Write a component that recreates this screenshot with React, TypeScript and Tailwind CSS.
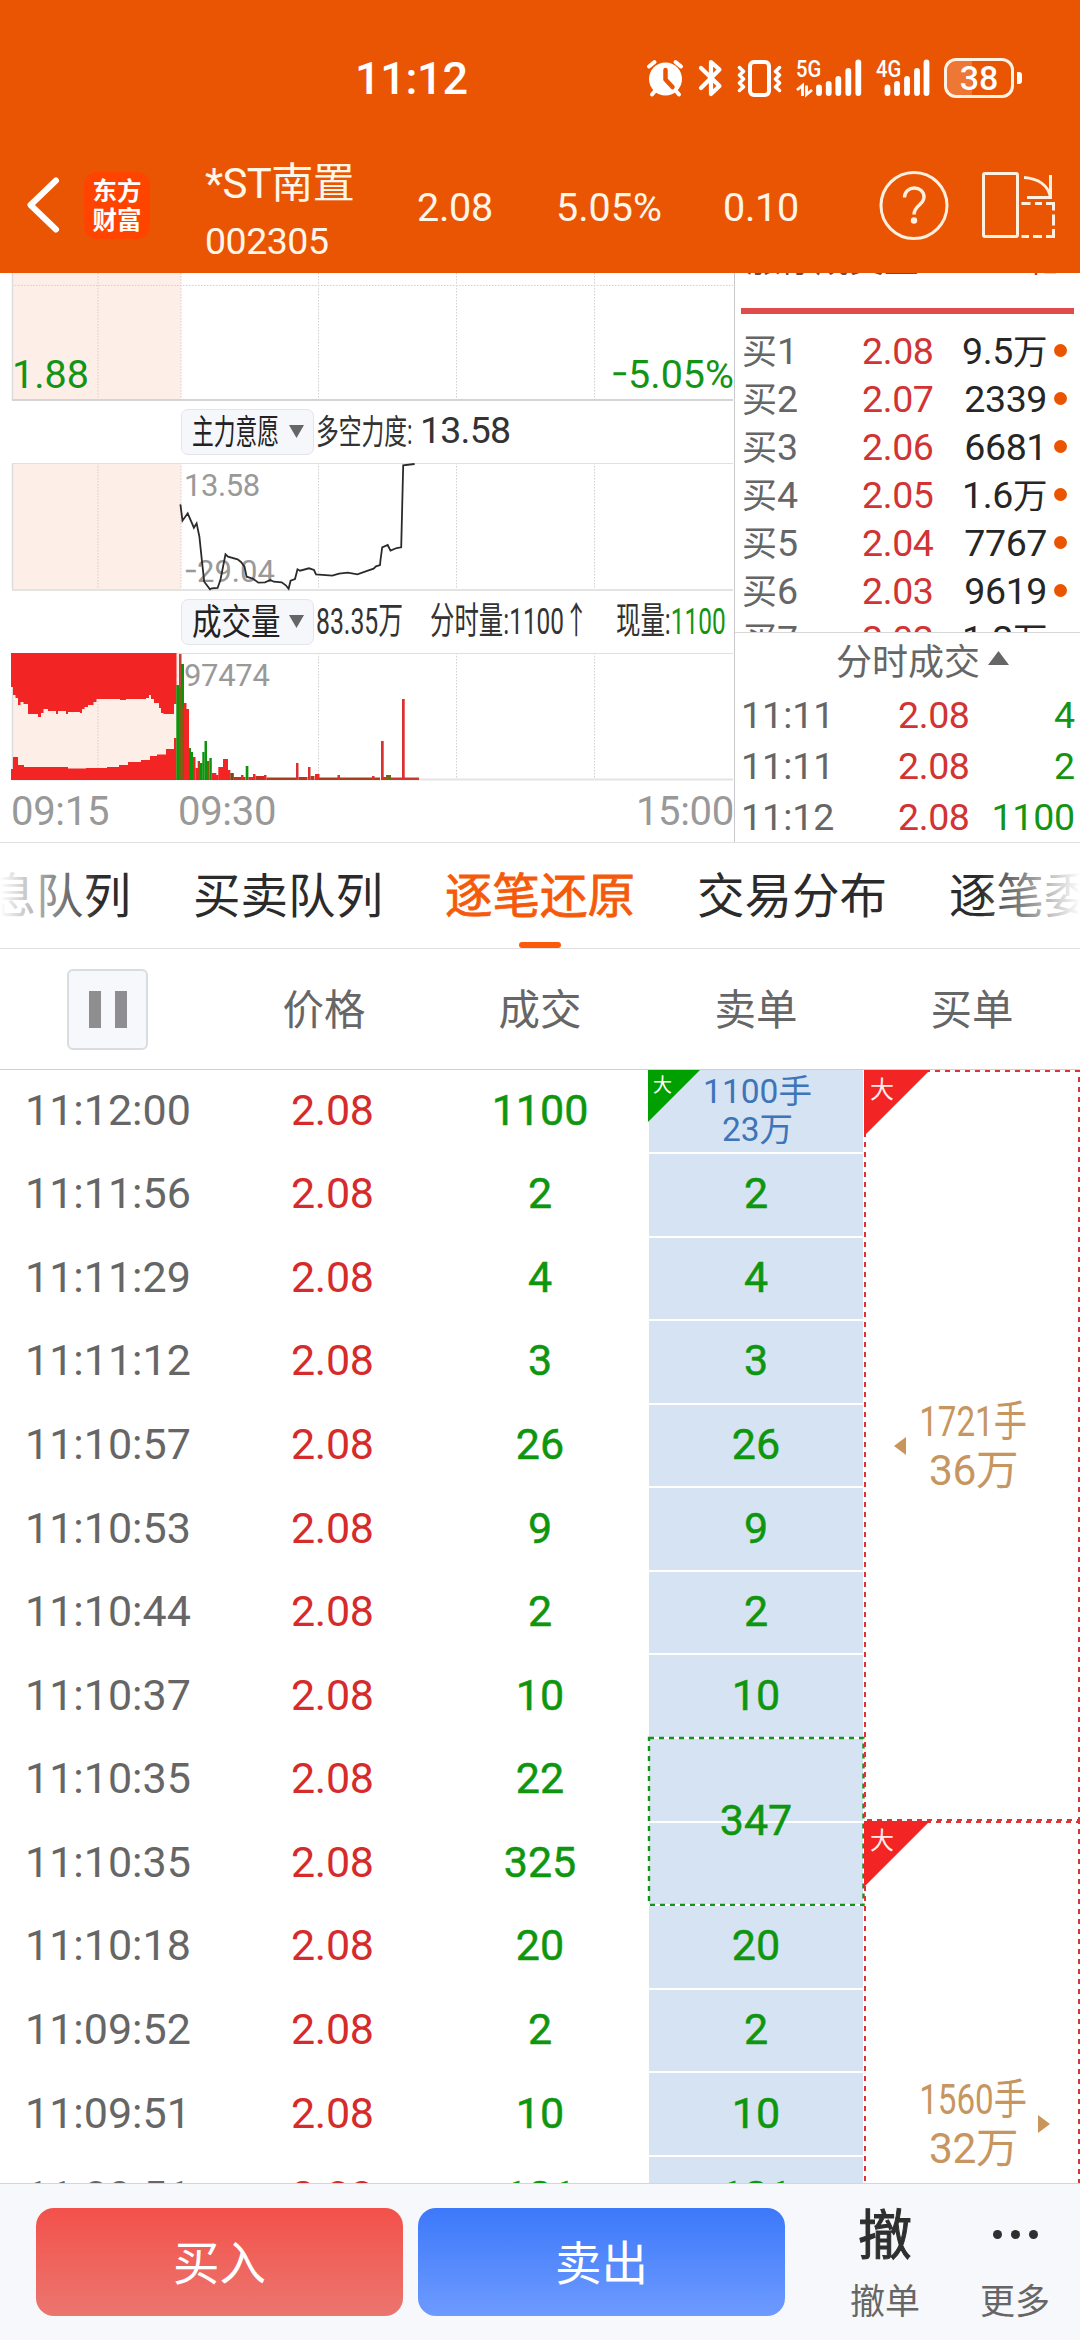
import React from "react";

const DASH = "5 5";

type TextProps = { className?: string; children: React.ReactNode };

/** Single line of figures or mixed text. */
function T({ className = "", children }: TextProps) {
  return <span className={`inline-block whitespace-nowrap -translate-y-[0.02em] ${className}`}>{children}</span>;
}

/** Single line of Chinese text, lowered to sit in the optical middle of its line. */
function C({ className = "", children }: TextProps) {
  return <span className={`inline-block whitespace-nowrap translate-y-[0.04em] ${className}`}>{children}</span>;
}

function Minus() {
  return <span className="inline-block w-[0.42em] origin-left scale-x-[0.78]">−</span>;
}

function StatusBar() {
  return (
    <div className="flex h-[156px] items-center text-white">
      <T className="ml-[355px] mt-[3px] w-[291px] text-[45px] font-medium tracking-[-0.3px]">11:12</T>
      <svg className="h-[40px] w-[38px] shrink-0" viewBox="0 0 38 40">
        <g stroke="#fff" strokeWidth="4" strokeLinecap="round" fill="none">
          <path d="M3 8.500L8.500 4M35 8.500L29.500 4" />
          <path d="M9 33L6 36.500M30 33L33 36.500" />
        </g>
        <circle cx="19.500" cy="21" r="16.500" fill="#fff" />
        <path d="M19.500 12v9.500l7 7.500" stroke="#ea5504" strokeWidth="4.500" fill="none" strokeLinejoin="round" strokeLinecap="round" />
      </svg>
      <svg className="ml-[14px] h-[40px] w-[26px] shrink-0" viewBox="0 0 26 40">
        <path d="M3 10L21.500 28L13 36V4L21.500 11.500L3 30" stroke="#fff" strokeWidth="4.200" fill="none" strokeLinecap="round" strokeLinejoin="round" />
      </svg>
      <svg className="ml-[13px] h-[40px] w-[46px] shrink-0" viewBox="0 0 46 40">
        <rect x="13" y="4" width="19" height="33" rx="4" stroke="#fff" strokeWidth="4" fill="none" />
        <path d="M2.500 9.500l4 4-4 3.500 4 4-4 4 4 4-4 3.500M42.500 9.500l-4 4 4 3.500-4 4 4 4-4 4 4 3.500" stroke="#fff" strokeWidth="3.500" fill="none" strokeLinejoin="round" strokeLinecap="round" />
      </svg>
      <div className="relative ml-[13px] h-[40px] w-[68px] shrink-0">
        <T className="absolute left-0 -top-px origin-left scale-x-[0.84] text-[24px] font-medium">5G</T>
        <svg className="absolute inset-0 h-[40px] w-[68px]" viewBox="0 0 68 40">
          <path d="M23 29.500v5.500M32.700 26v9M42.300 21v14M52.300 13v22M62.300 4.500v30.500" stroke="#fff" strokeWidth="5.800" strokeLinecap="round" />
          <path d="M6.500 38V27.500L1 32M10.500 27.500V36.500L16 32" stroke="#fff" strokeWidth="2.800" fill="none" />
        </svg>
      </div>
      <div className="relative ml-[12px] h-[40px] w-[56px] shrink-0">
        <T className="absolute left-0 -top-px origin-left scale-x-[0.84] text-[24px] font-medium">4G</T>
        <svg className="absolute inset-0 h-[40px] w-[56px]" viewBox="0 0 56 40">
          <path d="M11.500 29.500v5.500M21 26v9M31 21v14M41 13v22M50.500 4.500v30.500" stroke="#fff" strokeWidth="5.800" strokeLinecap="round" />
        </svg>
      </div>
      <div className="relative ml-[12px] flex h-[40px] w-[70px] shrink-0 items-center justify-center rounded-[12px] border-[3px] border-[#fff3e6]">
        <div className="absolute inset-y-0 left-0 w-[25px] rounded-l-[9px] bg-white/20" />
        <T className="mt-px text-[34px] font-medium">38</T>
      </div>
      <div className="ml-[3px] h-[12px] w-[5px] shrink-0 rounded-r-[3px] bg-white" />
    </div>
  );
}

function TitleBar() {
  return (
    <div className="flex h-[117px] text-[#fff6ea]">
      <svg className="ml-[24px] mt-[20px] h-[58px] w-[38px]" viewBox="0 0 38 58">
        <path d="M32 4.500L6.500 29L32 53.500" stroke="#fff" strokeWidth="6" fill="none" strokeLinecap="round" strokeLinejoin="round" />
      </svg>
      <div className="ml-[22px] mt-[16px] flex h-[67px] w-[66px] flex-col items-center rounded-[13px] bg-[#ff4400] pt-[4px] text-white">
        <C className="text-[24.5px] font-bold leading-[29px]">东方</C>
        <C className="text-[24.5px] font-bold leading-[29px]">财富</C>
      </div>
      <div className="ml-[55px] flex w-[212px] flex-col">
        <T className="mt-[7px] text-[42px] leading-[44px] tracking-[-0.6px]">*ST南置</T>
        <T className="mt-[13px] text-[37.5px] leading-[44px] tracking-[-0.5px]">002305</T>
      </div>
      <T className="mt-[33px] w-[139px] text-[39.5px] leading-[40px] tracking-[-0.3px]">2.08</T>
      <T className="mt-[33px] w-[167px] text-[39.5px] leading-[40px]">5.05%</T>
      <T className="mt-[33px] w-[156px] text-[39.5px] leading-[40px] tracking-[-0.3px]">0.10</T>
      <svg className="mt-[15px] h-[70px] w-[70px]" viewBox="0 0 70 70">
        <circle cx="35" cy="34.500" r="33" stroke="#fff0e0" strokeWidth="3" fill="none" />
        <path d="M25.500 26.500C25.500 14 45 14 45 26C45 34 35 34 35 43.500" stroke="#fff0e0" strokeWidth="3.400" fill="none" />
        <circle cx="35" cy="49.500" r="3.200" fill="#fff0e0" />
      </svg>
      <svg className="ml-[32px] mt-[15px] h-[70px] w-[74px]" viewBox="0 0 74 70">
        <g stroke="#fff0e0" strokeWidth="3" fill="none">
          <rect x="2.500" y="2.500" width="34" height="63" rx="1.500" />
          <path d="M43 6.500C57 7.500 67 14 69.500 26M69.500 4v22.500H46" />
          <path d="M40.500 32.500h9M54 32.500h7M65 32.500h7.500v7M72.500 43.500v11M72.500 58v7.500h-7.500M61 65.500h-9M48 65.500h-7.500" />
        </g>
      </svg>
    </div>
  );
}

function Grid({ h, dottedY }: { h: number; dottedY?: number }) {
  return (
    <g>
      <rect x="12" y="0" width="169" height={h} fill="#fdeee8" />
      <path d={`M98 0V${h}M181 0V${h}M318.500 0V${h}M456.500 0V${h}M594.500 0V${h}`} stroke="#d3d0cf" strokeWidth="1" strokeDasharray="1.500 1.500" />
      {dottedY !== undefined && <path d={`M12 ${dottedY}H733`} stroke="#d3d0cf" strokeDasharray="1.500 1.500" />}
      <path d={`M12.500 0V${h}`} stroke="#dcdcdc" strokeWidth="1.500" />
    </g>
  );
}

function Selector({ children }: { children: React.ReactNode }) {
  return (
    <div className="ml-[181px] flex h-[46px] w-[133px] shrink-0 items-center rounded-[7px] border border-[#e3e5ea] bg-[#f6f7fb] pl-[10px] text-[#222]">
      <div className="w-[97px]">{children}</div>
      <svg className="h-[13px] w-[15px]" viewBox="0 0 15 13">
        <path d="M0 0H15L7.500 13Z" fill="#666" />
      </svg>
    </div>
  );
}

const FORCE_LINE =
  "180.4,41.3 182.500,57.700 187.700,50.300 193.900,64.700 196.600,60.300 199.400,73.700 201.800,96.700 204.200,118.700 210,126.300 211.800,125.300 217.600,125 220.400,117 225.500,91.300 228,93.700 237.600,96.300 241,99 244.500,103.700 246.600,113.700 253,115.700 258.300,119.700 265,119.300 270.300,117 273.800,118.700 281.700,119.300 285.800,122.300 288.600,125.700 290.600,117.700 295,116 297.500,106.300 300,107.700 309,105.300 314,107 316,111.300 332.300,112.700 339,110.700 347.800,109.700 357.400,111.300 365,108.700 373.600,105.700 376,103.300 380,102 380.500,97 382.200,84.300 387.700,82 390.500,87.700 396.700,85 401.200,84.300 403.200,2.300 414.600,1";

// Call-auction volume, left to right: [x, y of the edge].
const AUCTION_TOP: [number, number][] = [
  [11, 34], [13, 42], [15.5, 45], [18, 52], [20.5, 49], [23.5, 51], [28, 61], [38, 64], [41, 60], [43.5, 56], [48, 58],
  [56, 61], [58, 58], [66, 61], [68, 59], [80, 60], [82, 56], [84.5, 54], [88, 52], [93.5, 49], [96.5, 46], [120, 47],
  [126, 46], [146, 45], [149, 42], [151, 46], [154, 50], [159, 55], [161, 60], [163.5, 61], [174, 51], [176.5, 51],
];

const AUCTION_BOTTOM: [number, number][] = [
  [11, 116], [13, 104], [18, 112], [24, 114], [68, 115.5], [86, 115], [107, 114], [119, 112], [128, 109], [141, 107],
  [150, 103], [157, 101.5], [166, 96], [174, 85], [176.5, 85],
];

function stepPath(points: [number, number][], base: number) {
  let d = `M${points[0][0]} ${base}V${points[0][1]}`;
  for (let i = 1; i < points.length; i++) d += `H${points[i][0]}V${points[i][1]}`;
  return `${d}V${base}Z`;
}

// [x, width, top, colour]
const VOLUME: [number, number, number, string][] = [
  [176.3, 3, 32, "#0d940d"], [179, 2.5, 1, "#c6403a"], [181, 3, 11, "#0d940d"],
  [184, 2.5, 50, "#f22424"], [186, 3, 56, "#f22424"], [189, 2, 95, "#0d940d"], [191, 2, 99, "#0d940d"],
  [193, 2.5, 104, "#f22424"], [195.5, 2.5, 115, "#f22424"], [197.7, 2.3, 108, "#c63a22"], [200, 2.5, 110, "#0d940d"],
  [202.3, 2.3, 99, "#0d940d"], [204.5, 2.5, 88, "#0d940d"], [207, 2.3, 108, "#7c6014"], [209.3, 2.5, 105, "#0d940d"],
  [211.8, 4.5, 120, "#f22424"], [216, 2.5, 122, "#f22424"], [218.3, 4.7, 114, "#f22424"], [223, 5, 106, "#f22424"],
  [228, 2.3, 117, "#f22424"], [230.3, 3.5, 120, "#7c4514"], [233.5, 12, 124, "#b33a20"], [241, 2.5, 122, "#f22424"],
  [245.7, 2.7, 113, "#0d940d"], [248.4, 5, 124, "#f22424"], [253, 2.5, 121, "#f22424"], [255.5, 9, 123, "#c23020"],
  [264, 2.5, 122, "#f22424"], [266.5, 30, 124.5, "#a54018"], [296, 2.5, 110, "#da3030"], [298.5, 9, 124, "#c23020"],
  [308, 2.5, 114, "#da3030"], [310.5, 4, 123, "#b33a20"], [315, 4.5, 121, "#f22424"], [319, 19, 124.5, "#a54018"],
  [337.5, 2.5, 122, "#da3030"], [340, 40, 124.5, "#a54018"], [372, 2.5, 123, "#da3030"], [381, 2.7, 88, "#da3030"],
  [383, 4, 124, "#f22424"], [386, 5, 122, "#6c6a14"], [391, 28, 124.5, "#c83a30"], [402, 2.7, 46, "#da3030"],
];

function ChartPane() {
  return (
    <div className="w-[735px] shrink-0 border-r border-[#c8c8cc]">
      <div className="relative h-[128px]">
        <svg className="block h-[128px] w-[733px]" viewBox="0 0 733 128">
          <Grid h={127} dottedY={12.5} />
          <path d="M12 127H733" stroke="#d4d4d4" strokeWidth="2" />
        </svg>
        <T className="absolute left-[12px] top-[83px] text-[39.5px] text-[#149414]">1.88</T>
        <T className="absolute right-0 top-[83px] text-[39.5px] text-[#149414]">
          <Minus />
          5.05%
        </T>
      </div>
      <div className="flex h-[62px] items-center pb-px">
        <Selector>
          <C className="origin-left scale-x-[0.63] text-[34.5px]">主力意愿</C>
        </Selector>
        <C className="ml-[2px] w-[104px] origin-left scale-x-[0.66] text-[34.5px] text-[#333]">多空力度:</C>
        <T className="text-[37.5px] tracking-[-0.8px] text-[#333]">13.58</T>
      </div>
      <div className="relative h-[127px]">
        <T className="absolute left-[184px] top-[8px] text-[31px] tracking-[-0.4px] text-[#999]">13.58</T>
        <T className="absolute left-[184px] top-[94px] text-[31px] text-[#999]">
          <Minus />
          29.04
        </T>
        <svg className="relative block h-[128px] w-[733px]" viewBox="0 0 733 128">
          <Grid h={126} />
          <path d="M12 .5H733" stroke="#e0e0e0" />
          <path d="M12 127H733" stroke="#dadada" strokeWidth="1.500" />
          <polyline points={FORCE_LINE} fill="none" stroke="#2b2b2b" strokeWidth="1.800" />
        </svg>
      </div>
      <div className="flex h-[63px] items-center">
        <Selector>
          <C className="origin-left scale-x-[0.82] text-[36px]">成交量</C>
        </Selector>
        <T className="ml-[2px] mt-[2px] w-[114px] origin-left scale-x-[0.67] text-[37px] text-[#333]">83.35万</T>
        <T className="mt-[2px] w-[186px] origin-left scale-x-[0.66] text-[37px] text-[#333]">分时量:1100↑</T>
        <T className="mt-[2px] w-[110px] origin-left scale-x-[0.66] text-[37px] text-[#333]">
          现量:<span className="text-[#149414]">1100</span>
        </T>
      </div>
      <div className="relative h-[127px]">
        <svg className="block h-[128px] w-[733px]" viewBox="0 0 733 128">
          <Grid h={126} />
          <path d="M12 .5H733" stroke="#e0e0e0" />
          <path d="M12 126.500H733" stroke="#e4e4e4" strokeWidth="2" />
          <path d={stepPath(AUCTION_TOP, 0)} fill="#f22424" />
          <path d={stepPath(AUCTION_BOTTOM, 127)} fill="#f22424" />
          {VOLUME.map(([x, w, y, c], i) => (
            <rect key={i} x={x} y={y} width={w} height={127 - y} fill={c} />
          ))}
          <path d="M179 35h2.500v20h2v72H179z" fill="#7c6014" />
        </svg>
        <T className="absolute left-[184px] top-[8px] text-[31px] tracking-[-0.3px] text-[#999]">97474</T>
      </div>
      <div className="flex h-[62px] items-center pt-[4px] text-[40px] tracking-[-0.3px] text-[#999]">
        <T className="ml-[11px] w-[167px]">09:15</T>
        <T className="w-[458px]">09:30</T>
        <T>15:00</T>
      </div>
    </div>
  );
}

const BIDS = [
  ["买1", "2.08", "9.5", "万"],
  ["买2", "2.07", "2339", ""],
  ["买3", "2.06", "6681", ""],
  ["买4", "2.05", "1.6", "万"],
  ["买5", "2.04", "7767", ""],
  ["买6", "2.03", "9619", ""],
  ["买7", "2.02", "1.2", "万"],
];

const TICKS = [
  ["11:11", "2.08", "4"],
  ["11:11", "2.08", "2"],
  ["11:12", "2.08", "1100"],
];

function QuotePane() {
  return (
    <div className="flex h-[569px] flex-1 flex-col">
      <div className="h-[360px] shrink-0 overflow-hidden border-b border-[#d8d8d8]">
        <div className="relative h-[35px] overflow-hidden">
          <T className="absolute -top-[29px] left-[11px] text-[34.5px] text-[#555]">涨停成交量</T>
          <T className="absolute -top-[27px] right-[19px] text-[32px] text-[#d63030]">2.1亿</T>
        </div>
        <div className="ml-[6px] mr-[6px] h-[6px] bg-[#e04c4c]" />
        <div className="pt-[15px]">
          {BIDS.map(([label, price, amount, unit]) => (
            <div key={label} className="flex h-[48px] items-center text-[37.5px]">
              <T className="ml-[7px] w-[120px] text-[#666]">
                <span className="text-[35px]">{label[0]}</span>
                {label[1]}
              </T>
              <T className="w-[80px] tracking-[-0.4px] text-[#d23333]">{price}</T>
              <T className="w-[105px] text-right tracking-[-0.4px] text-[#262626]">
                {amount}
                <span className="text-[34.5px]">{unit}</span>
              </T>
              <span className="mb-[5px] ml-[7px] h-[13px] w-[13px] rounded-full bg-[#ea5504]" />
            </div>
          ))}
        </div>
      </div>
      <div className="flex h-[58px] shrink-0 items-center text-[#666]">
        <C className="ml-[101px] text-[36px]">分时成交</C>
        <svg className="mb-[8px] ml-[8px] h-[14px] w-[21px]" viewBox="0 0 21 14">
          <path d="M0 14H21L10.500 0Z" fill="#666" />
        </svg>
      </div>
      {TICKS.map(([time, price, amount], i) => (
        <div key={i} className="flex h-[51px] shrink-0 items-center pt-px text-[37.5px]">
          <T className="ml-[6px] w-[157px] text-[#666]">{time}</T>
          <T className="w-[80px] tracking-[-0.4px] text-[#d23333]">{price}</T>
          <T className="w-[97px] text-right tracking-[-0.2px] text-[#149414]">{amount}</T>
        </div>
      ))}
    </div>
  );
}

const TABS = ["信息队列", "买卖队列", "逐笔还原", "交易分布", "逐笔委托"];

function Tabs() {
  return (
    <div className="relative flex h-[106px] justify-center overflow-hidden border-b border-[#e0e0e0] bg-white">
      {TABS.map((tab, i) => (
        <div
          key={tab}
          className={`relative flex w-[252px] shrink-0 items-center justify-center text-[47.5px] ${i === 2 ? "text-[#f55a0a] [-webkit-text-stroke:0.8px_#f55a0a]" : "text-[#2b2b2b]"}`}
        >
          <C>{tab}</C>
          {i === 2 && <span className="absolute bottom-0 left-[105px] h-[6px] w-[42px] rounded-[3px] bg-[#fa5a0a]" />}
        </div>
      ))}
      <div className="absolute inset-y-0 left-0 w-[100px] bg-gradient-to-r from-white to-white/0" />
      <div className="absolute inset-y-0 right-0 w-[100px] bg-gradient-to-l from-white to-white/0" />
    </div>
  );
}

function TableHead() {
  return (
    <div className="grid h-[121px] grid-cols-5 items-center border-b border-[#cfcfcf] text-center text-[41.5px] text-[#666]">
      <div className="ml-[67px] flex h-[81px] w-[81px] items-center justify-center gap-[14px] rounded-[6px] border-2 border-[#d9dce1] bg-[#f6f8fb]">
        <span className="h-[37px] w-[12px] bg-[#8e8e90]" />
        <span className="h-[37px] w-[12px] bg-[#8e8e90]" />
      </div>
      <C>价格</C>
      <C>成交</C>
      <C>卖单</C>
      <C>买单</C>
    </div>
  );
}

const TRADES: [string, string][] = [
  ["11:12:00", "1100"],
  ["11:11:56", "2"],
  ["11:11:29", "4"],
  ["11:11:12", "3"],
  ["11:10:57", "26"],
  ["11:10:53", "9"],
  ["11:10:44", "2"],
  ["11:10:37", "10"],
  ["11:10:35", "22"],
  ["11:10:35", "325"],
  ["11:10:18", "20"],
  ["11:09:52", "2"],
  ["11:09:51", "10"],
  ["11:09:51", "121"],
];

function TradeRows() {
  return (
    <div className="-mt-[0.6px] w-[648px]">
      {TRADES.map(([time, amount], i) => (
        <div key={i} className="flex h-[83.58px] items-center text-[43px]">
          <T className="ml-[25px] w-[266px] text-[#666]">{time}</T>
          <T className="w-[141px] tracking-[-0.3px] text-[#d62b2b]">2.08</T>
          <T className="w-[216px] text-center text-[#0f960f] [-webkit-text-stroke:0.5px_#0f960f]">{amount}</T>
        </div>
      ))}
    </div>
  );
}

function SellColumn() {
  return (
    <div className="-mt-[0.6px] w-[216px] text-[43px] text-[#0f960f]">
      {TRADES.map(([, amount], i) => {
        if (i === 9) return null;
        if (i === 8)
          return (
            <div key={i} className="relative h-[167.16px] pt-px">
              <div className="ml-px h-[81.58px] w-[214px] bg-[#d6e3f3]" />
              <div className="ml-px mt-[2px] h-[81.58px] w-[214px] bg-[#d6e3f3]" />
              <svg className="absolute inset-0 h-[168px] w-[217px] overflow-visible" viewBox="0 0 217 168">
                <rect x="1" y="0" width="214.500" height="167" fill="none" stroke="#149414" strokeWidth="2.400" strokeDasharray={DASH} />
              </svg>
              <div className="absolute inset-0 flex items-center justify-center [-webkit-text-stroke:0.5px_#0f960f]">
                <T>347</T>
              </div>
            </div>
          );
        return (
          <div key={i} className="relative h-[83.58px] p-px">
            <div className="flex h-full w-[214px] flex-col items-center justify-center bg-[#d6e3f3]">
              {i === 0 ? (
                <div className="flex flex-col items-center pl-[3px] pt-px text-[33.5px] text-[#3d75b8]">
                  <T className="leading-[38px]">1100手</T>
                  <T className="leading-[38px]">23万</T>
                </div>
              ) : (
                <T className="[-webkit-text-stroke:0.5px_#0f960f]">{amount}</T>
              )}
            </div>
            {i === 0 && (
              <div className="absolute left-0 top-[0.6px] flex h-[52px] w-[52px] items-start bg-[#00a000] pl-[5px] pt-[5px] text-white [clip-path:polygon(0_0,100%_0,0_100%)]">
                <C className="text-[19px]">大</C>
              </div>
            )}
          </div>
        );
      })}
    </div>
  );
}

function BigBadge() {
  return (
    <div className="absolute left-0 top-0 flex h-[66px] w-[66px] items-start bg-[#f22424] pl-[6px] pt-[7px] text-[#ffecec] [clip-path:polygon(0_0,100%_0,0_100%)]">
      <C className="text-[24px]">大</C>
    </div>
  );
}

function BuyColumn() {
  return (
    <div className="w-[216px] text-[#c79660]">
      <div className="relative flex h-[751px] flex-col items-center">
        <svg className="absolute inset-0 h-[751px] w-[216px]" viewBox="0 0 216 751">
          <rect x="1" y="1" width="214" height="749" fill="none" stroke="#d33" strokeWidth="2" strokeDasharray={DASH} />
        </svg>
        <BigBadge />
        <div className="mt-[328px] flex flex-col items-center pl-[3px] text-[42.5px]">
          <T className="scale-x-[0.78] leading-[49px]">1721手</T>
          <T className="leading-[49px] tracking-[-0.4px]">36万</T>
        </div>
        <svg className="absolute left-[30px] top-[367px] h-[18px] w-[12px]" viewBox="0 0 12 18">
          <path d="M12 0V18L0 9Z" fill="#c9955a" />
        </svg>
      </div>
      <div className="relative flex h-[362px] flex-col items-center">
        <svg className="absolute inset-0 h-[362px] w-[216px]" viewBox="0 0 216 362">
          <path d="M1 370V1H215V370" fill="none" stroke="#d33" strokeWidth="2" strokeDasharray={DASH} />
        </svg>
        <BigBadge />
        <div className="mt-[255px] flex flex-col items-center pl-[3px] text-[42.5px]">
          <T className="scale-x-[0.78] leading-[49px]">1560手</T>
          <T className="leading-[49px] tracking-[-0.4px]">32万</T>
        </div>
        <svg className="absolute left-[174px] top-[294px] h-[18px] w-[12px]" viewBox="0 0 12 18">
          <path d="M0 0V18L12 9Z" fill="#c9955a" />
        </svg>
      </div>
    </div>
  );
}

function ActionBar() {
  return (
    <div className="flex h-[157px] border-t border-[#d4d6da] bg-[#f6f8fb]">
      <button className="ml-[36px] mt-[24px] flex h-[108px] w-[367px] items-center justify-center rounded-[18px] bg-gradient-to-b from-[#f3504a] to-[#eb756f] text-[46.5px] text-white">
        <C>买入</C>
      </button>
      <button className="ml-[15px] mt-[24px] flex h-[108px] w-[367px] items-center justify-center rounded-[18px] bg-gradient-to-b from-[#3c78fa] to-[#6d9afe] text-[46.5px] text-white">
        <C>卖出</C>
      </button>
      <div className="ml-[35px] flex w-[130px] flex-col items-center">
        <C className="mt-[24px] text-[54px] text-[#2f2f2f] [-webkit-text-stroke:1px_#2f2f2f]">撤</C>
        <C className="mt-[22px] text-[35px] text-[#666]">撤单</C>
      </div>
      <div className="flex w-[130px] flex-col items-center">
        <div className="mt-[46px] flex gap-[9px]">
          <span className="h-[9px] w-[9px] rounded-full bg-[#2f2f2f]" />
          <span className="h-[9px] w-[9px] rounded-full bg-[#2f2f2f]" />
          <span className="h-[9px] w-[9px] rounded-full bg-[#2f2f2f]" />
        </div>
        <C className="mt-[45px] text-[35px] text-[#666]">更多</C>
      </div>
    </div>
  );
}

export default function App() {
  return (
    <div className="flex h-[2340px] w-[1080px] flex-col overflow-hidden bg-white font-['Roboto','Noto_Sans_CJK_SC',sans-serif] leading-none">
      <header className="h-[273px] bg-[#ea5504]">
        <StatusBar />
        <TitleBar />
      </header>
      <section className="flex h-[570px] border-b border-[#e0e0e0]">
        <ChartPane />
        <QuotePane />
      </section>
      <Tabs />
      <TableHead />
      <main className="flex h-[1113px] overflow-hidden">
        <TradeRows />
        <SellColumn />
        <BuyColumn />
      </main>
      <ActionBar />
    </div>
  );
}
